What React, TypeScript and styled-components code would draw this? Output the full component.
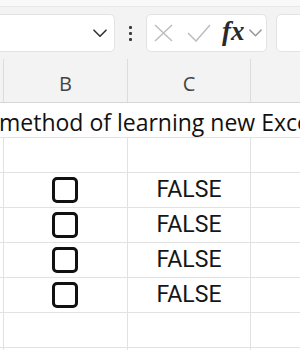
import React, { ReactElement } from 'react';
import styled, { createGlobalStyle } from 'styled-components';

const GlobalStyle = createGlobalStyle`
  html, body {
    margin: 0;
    padding: 0;
    background: #ffffff;
    overflow: hidden;
  }
  body {
    font-family: "Open Sans", "Noto Sans", sans-serif;
  }
`;

const Page = styled.div`
  width: 300px;
  height: 350px;
  overflow: hidden;
  background: #ffffff;
`;

const TopStrip = styled.div`
  height: 6px;
  background: #f9f9f9;
  border-bottom: 1px solid #e8e8e8;
`;

const Toolbar = styled.div`
  display: flex;
  align-items: center;
  height: 52px;
  background: #f3f3f3;
`;

const Box = styled.div<{ $width: number }>`
  box-sizing: border-box;
  display: flex;
  align-items: center;
  flex: 0 0 ${(p) => p.$width}px;
  height: 38px;
  background: #ffffff;
  border: 1px solid #e3e3e3;
  border-radius: 5px;
`;

const NameBox = styled(Box)`
  margin-left: -5px;
  justify-content: flex-end;
  padding-right: 7px;
`;

const Dots = styled.div`
  flex: 0 0 31px;
  display: flex;
  flex-direction: column;
  align-items: center;
  gap: 3px;

  & > span {
    width: 3px;
    height: 3px;
    border-radius: 1px;
    background: #3c3c3c;
  }
`;

const FormulaBox = styled(Box)`
  padding-left: 7px;
`;

const InputBox = styled(Box)`
  margin-left: 9px;
`;

const FxLabel = styled.span`
  font-family: "Liberation Serif", "DejaVu Serif", serif;
  font-style: italic;
  font-weight: bold;
  font-size: 27px;
  line-height: 1;
  color: #2a2a2a;
  margin-left: 11px;
  padding-bottom: 4px;
`;

const SmallChevron = styled.span`
  display: flex;
  margin-left: 4px;
`;

const HeaderRow = styled.div`
  display: flex;
  height: 43px;
  background: #f3f3f3;
  border-bottom: 1px solid #d6d6d6;
`;

const HeaderCell = styled.div<{ $width: number }>`
  box-sizing: border-box;
  flex: 0 0 ${(p) => p.$width}px;
  display: flex;
  align-items: center;
  justify-content: center;
  padding-top: 6px;
  border-right: 1px solid #dcdcdc;
  font-family: "Open Sans", sans-serif;
  font-size: 20px;
  color: #444444;
  &:last-child { border-right: none; flex: 1; }
`;

const TitleRow = styled.div`
  height: 34px;
  border-bottom: 1px solid #e2e2e2;
  display: flex;
  align-items: center;
  overflow: hidden;
  white-space: nowrap;
`;

const TitleText = styled.span`
  margin-left: -1px;
  padding-top: 4px;
  font-family: "Open Sans", sans-serif;
  font-size: 23px;
  color: #111111;
`;

const Row = styled.div`
  display: flex;
  height: 34px;
  border-bottom: 1px solid #e2e2e2;
`;

const Cell = styled.div<{ $width: number }>`
  box-sizing: border-box;
  flex: 0 0 ${(p) => p.$width}px;
  display: flex;
  align-items: center;
  justify-content: center;
  border-right: 1px solid #e2e2e2;
  &:last-child { border-right: none; flex: 1; }
`;

const CheckBox = styled.div`
  box-sizing: border-box;
  width: 26px;
  height: 26px;
  border: 3px solid #111111;
  border-radius: 5px;
  margin-left: -1px;
`;

const BoolText = styled.span`
  font-family: "Roboto", sans-serif;
  font-size: 23px;
  color: #161616;
  padding-bottom: 1px;
`;

const columns = [4, 124, 123, 0];

const Chevron = ({ color, size }: { color: string; size: number }): ReactElement => (
  <svg width={size} height={size * 0.6} viewBox="0 0 14 8" fill="none">
    <path d="M1 1l6 6 6-6" stroke={color} strokeWidth="1.6" strokeLinecap="round" strokeLinejoin="round" />
  </svg>
);

const App = (): ReactElement => {
  const checks = [false, false, false, false];
  return (
    <Page>
      <GlobalStyle />
      <TopStrip />
      <Toolbar>
        <NameBox $width={120}>
          <Chevron color="#333333" size={14} />
        </NameBox>
        <Dots>
          <span />
          <span />
          <span />
        </Dots>
        <FormulaBox $width={121}>
          <svg width="19" height="18" viewBox="0 0 19 18" fill="none">
            <path d="M1 1l17 16M18 1L1 17" stroke="#bdbdbd" strokeWidth="1.5" />
          </svg>
          <svg width="24" height="18" viewBox="0 0 24 18" fill="none" style={{ marginLeft: 14 }}>
            <path d="M1 9l8 8L23 1" stroke="#bdbdbd" strokeWidth="1.5" />
          </svg>
          <FxLabel>fx</FxLabel>
          <SmallChevron>
            <Chevron color="#9a9a9a" size={13} />
          </SmallChevron>
        </FormulaBox>
        <InputBox $width={40} />
      </Toolbar>
      <HeaderRow>
        {['', 'B', 'C', ''].map((label, i) => (
          <HeaderCell key={i} $width={columns[i]}>{label}</HeaderCell>
        ))}
      </HeaderRow>
      <TitleRow>
        <TitleText>method of learning new Excel</TitleText>
      </TitleRow>
      <Row>
        {columns.map((w, i) => <Cell key={i} $width={w} />)}
      </Row>
      {checks.map((v, r) => (
        <Row key={r}>
          <Cell $width={columns[0]} />
          <Cell $width={columns[1]}><CheckBox /></Cell>
          <Cell $width={columns[2]}><BoolText>{v ? 'TRUE' : 'FALSE'}</BoolText></Cell>
          <Cell $width={0} />
        </Row>
      ))}
      <Row>
        {columns.map((w, i) => <Cell key={i} $width={w} />)}
      </Row>
      <Row>
        {columns.map((w, i) => <Cell key={i} $width={w} />)}
      </Row>
    </Page>
  );
};

export default App;
